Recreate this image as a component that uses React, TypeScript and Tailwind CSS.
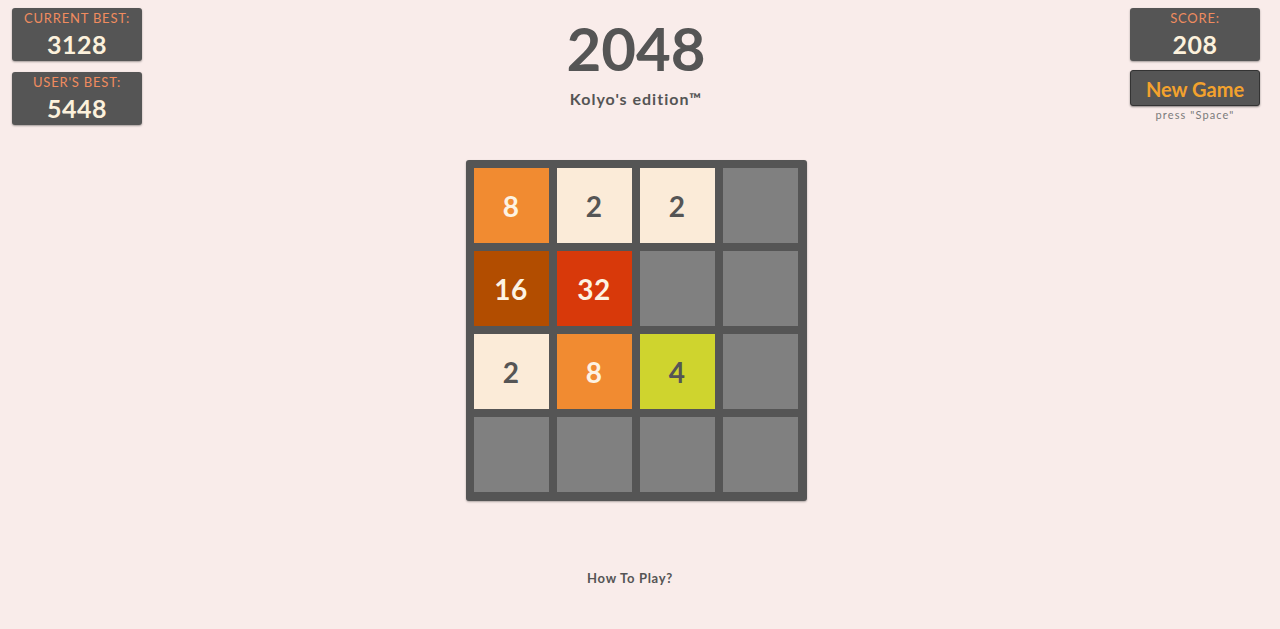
import React from "react";

const FONT = "font-['Comic_Sans_MS','Lato','Noto_Sans',sans-serif]";

const grid: (number | null)[][] = [
  [8, 2, 2, null],
  [16, 32, null, null],
  [2, 8, 4, null],
  [null, null, null, null],
];

function tileClass(v: number | null): string {
  switch (v) {
    case 2:
      return "bg-[#fbebd8] text-[#555555]";
    case 4:
      return "bg-[#cfd42e] text-[#555555]";
    case 8:
      return "bg-[#f18b31] text-[#fdf3e3]";
    case 16:
      return "bg-[#b24d00] text-[#fdf3e3]";
    case 32:
      return "bg-[#d8390a] text-[#fdf3e3]";
    default:
      return "bg-[#808080]";
  }
}

function InfoBox({ label, value }: { label: string; value: string }) {
  return (
    <div className="w-[130px] h-[53px] rounded-[3px] bg-[#555555] shadow-[0_1px_2px_rgba(0,0,0,0.35)] flex flex-col items-center">
      <div className="text-[13px] leading-[13px] mt-[4px] tracking-[0.8px] text-[#f08c5f] uppercase">{label}</div>
      <div className="text-[25px] leading-[28px] mt-[5px] font-bold tracking-[0.5px] text-[#fcf1dc]">{value}</div>
    </div>
  );
}

export default function App() {
  return (
    <div className={`${FONT} w-full h-[629px] bg-[#f9ecea] text-[#555555] flex flex-col`}>
      <div className="flex pl-[12px] pr-[20px] pt-[8px]">
        <div className="w-[130px] flex flex-col gap-[11px]">
          <InfoBox label="Current Best:" value="3128" />
          <InfoBox label="User's Best:" value="5448" />
        </div>
        <div className="flex-1 flex flex-col items-center">
          <div className="text-[60px] leading-[60px] mt-[10px] font-bold">2048</div>
          <div className="text-[16px] leading-[20px] mt-[11px] font-bold tracking-[1px]">Kolyo's edition™</div>
        </div>
        <div className="w-[130px] flex flex-col items-center">
          <InfoBox label="Score:" value="208" />
          <button className="mt-[9px] w-[130px] h-[36px] rounded-[3px] bg-[#555555] border border-[#333333] shadow-[0_1px_2px_rgba(0,0,0,0.45)] text-[#f3a22d] text-[20px] font-bold leading-[20px] pt-[1px]">
            New Game
          </button>
          <div className="text-[11px] leading-[12px] mt-[3px] tracking-[1.1px] text-[#7a7a7a]">press "Space"</div>
        </div>
      </div>
      <div className="flex justify-center pr-[8px] mt-[35px]">
        <div className="bg-[#555555] rounded-[3px] pt-[8px] pl-[8px] pr-[9px] pb-[9px] grid grid-cols-4 gap-[8px] shadow-[0_1px_2px_rgba(0,0,0,0.3)]">
          {grid.flat().map((v, i) => (
            <div
              key={i}
              className={`w-[75px] h-[75px] flex items-center justify-center text-[28px] font-bold tracking-[0.5px] ${tileClass(v)}`}
            >
              {v ?? ""}
            </div>
          ))}
        </div>
      </div>
      <div className="flex justify-center pr-[20px] mt-[69px]">
        <div className="text-[13px] leading-[16px] font-bold tracking-[0.7px] text-[#555555]">How To Play?</div>
      </div>
    </div>
  );
}
